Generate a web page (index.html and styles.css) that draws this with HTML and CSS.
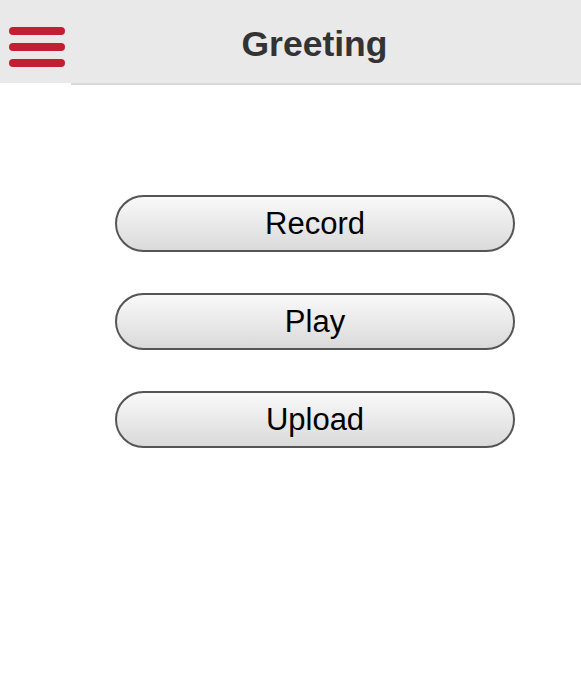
FILE: index.html
```html
<!DOCTYPE html>
<html>
<head>
<meta charset="utf-8">
<link rel="stylesheet" href="styles.css">
</head>
<body>
<header class="header">
  <div class="menu">
    <span class="bar"></span>
    <span class="bar"></span>
    <span class="bar"></span>
  </div>
  <div class="title-area">
    <h1 class="title">Greeting</h1>
  </div>
</header>
<main class="content">
  <button class="btn">Record</button>
  <button class="btn">Play</button>
  <button class="btn">Upload</button>
</main>
</body>
</html>
```
FILE: styles.css
```css
html, body {
  margin: 0;
  padding: 0;
  background: #ffffff;
  font-family: "Liberation Sans", Arial, sans-serif;
}
.header {
  display: flex;
  align-items: flex-start;
  background: #ffffff;
}
.menu {
  width: 71px;
  height: 83px;
  box-sizing: border-box;
  background: #e9e9e9;
  display: flex;
  flex-direction: column;
  gap: 8px;
  padding: 27px 0 0 9px;
}
.bar {
  display: block;
  width: 56px;
  height: 8px;
  border-radius: 4px;
  background: #c41e33;
}
.title-area {
  flex: 1;
  height: 83px;
  box-sizing: content-box;
  background: #e9e9e9;
  border-bottom: 2px solid #d9d9d9;
  display: flex;
  align-items: center;
  justify-content: center;
  padding-right: 23px;
}
.title {
  margin: 6px 0 0 0;
  font-size: 35.5px;
  font-weight: bold;
  color: #333333;
  line-height: 1;
}
.content {
  display: flex;
  flex-direction: column;
  align-items: center;
  gap: 41px;
  padding: 110px 0 0 49px;
}
.btn {
  width: 400px;
  height: 57px;
  box-sizing: border-box;
  border: 2px solid #555555;
  border-radius: 29px;
  background: linear-gradient(to bottom, #f9f9f9, #dadada);
  font-family: "Liberation Sans", Arial, sans-serif;
  font-size: 31px;
  color: #000000;
  padding: 0;
  display: flex;
  align-items: center;
  justify-content: center;
}
```
